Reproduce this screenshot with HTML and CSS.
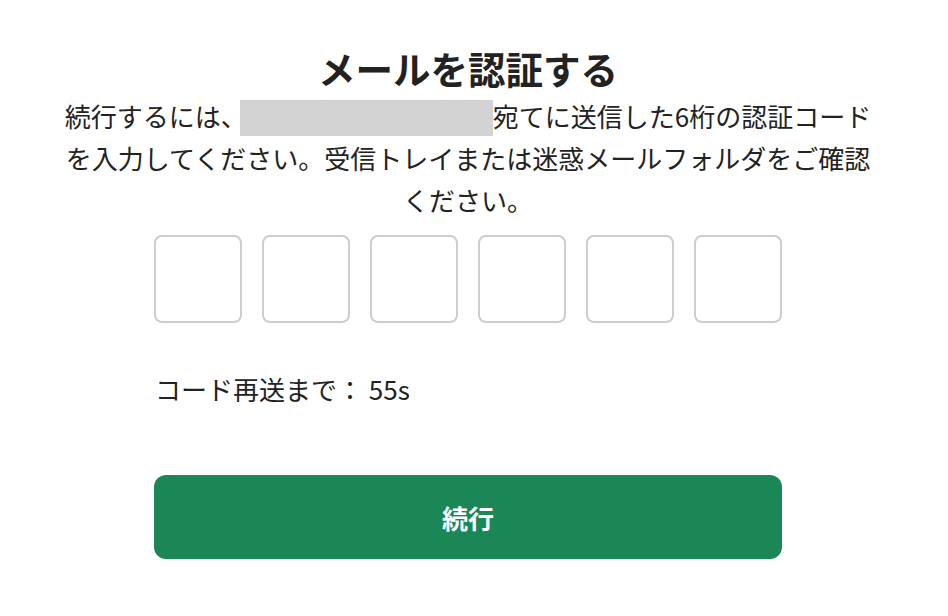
FILE: index.html
```html
<!DOCTYPE html>
<html lang="ja">
<head>
<meta charset="utf-8">
<title>メールを認証する</title>
<link rel="stylesheet" href="styles.css">
</head>
<body>
<main class="page">
  <h1 class="title">メールを認証する</h1>
  <p class="lead">続行するには、<span class="email"></span>宛てに送信した6桁の認証コードを入力してください。受信トレイまたは迷惑メールフォルダをご確認ください。</p>
  <form class="form">
    <div class="codes">
      <input class="code" type="text" maxlength="1" aria-label="1">
      <input class="code" type="text" maxlength="1" aria-label="2">
      <input class="code" type="text" maxlength="1" aria-label="3">
      <input class="code" type="text" maxlength="1" aria-label="4">
      <input class="code" type="text" maxlength="1" aria-label="5">
      <input class="code" type="text" maxlength="1" aria-label="6">
    </div>
    <p class="timer">コード再送まで： 55s</p>
    <button class="submit" type="button">続行</button>
  </form>
</main>
</body>
</html>
```

FILE: styles.css
```css
html, body {
  margin: 0;
  padding: 0;
  background: #ffffff;
}

body {
  font-family: "Noto Sans CJK JP", "Noto Sans", sans-serif;
  color: #222222;
}

.page {
  width: 936px;
  display: flex;
  flex-direction: column;
  align-items: center;
  padding-top: 45px;
}

.title {
  margin: 0;
  font-size: 37.5px;
  line-height: 45px;
  font-weight: 700;
  color: #222222;
}

.lead {
  width: 816px;
  margin: 5px 0 0;
  font-size: 26px;
  line-height: 42px;
  text-align: center;
}

.email {
  display: inline-block;
  width: 253px;
  height: 36px;
  margin-left: -7px;
  vertical-align: -9px;
  background: #d3d3d3;
}

.form {
  width: 628px;
  display: flex;
  flex-direction: column;
  margin-top: 14px;
}

.codes {
  display: flex;
  justify-content: space-between;
}

.code {
  box-sizing: border-box;
  width: 88px;
  height: 88px;
  margin: 0;
  padding: 0;
  border: 2px solid #cdcdcd;
  border-radius: 8px;
  background: #ffffff;
  font: inherit;
  font-size: 32px;
  text-align: center;
}

.timer {
  margin: 48px 0 0 1px;
  font-size: 26px;
  line-height: 36px;
}

.submit {
  margin-top: 68px;
  height: 84px;
  border: none;
  border-radius: 12px;
  background: #1b8756;
  color: #ffffff;
  font-family: "Noto Sans CJK JP", "Noto Sans", sans-serif;
  font-size: 26px;
  font-weight: 700;
}
```
